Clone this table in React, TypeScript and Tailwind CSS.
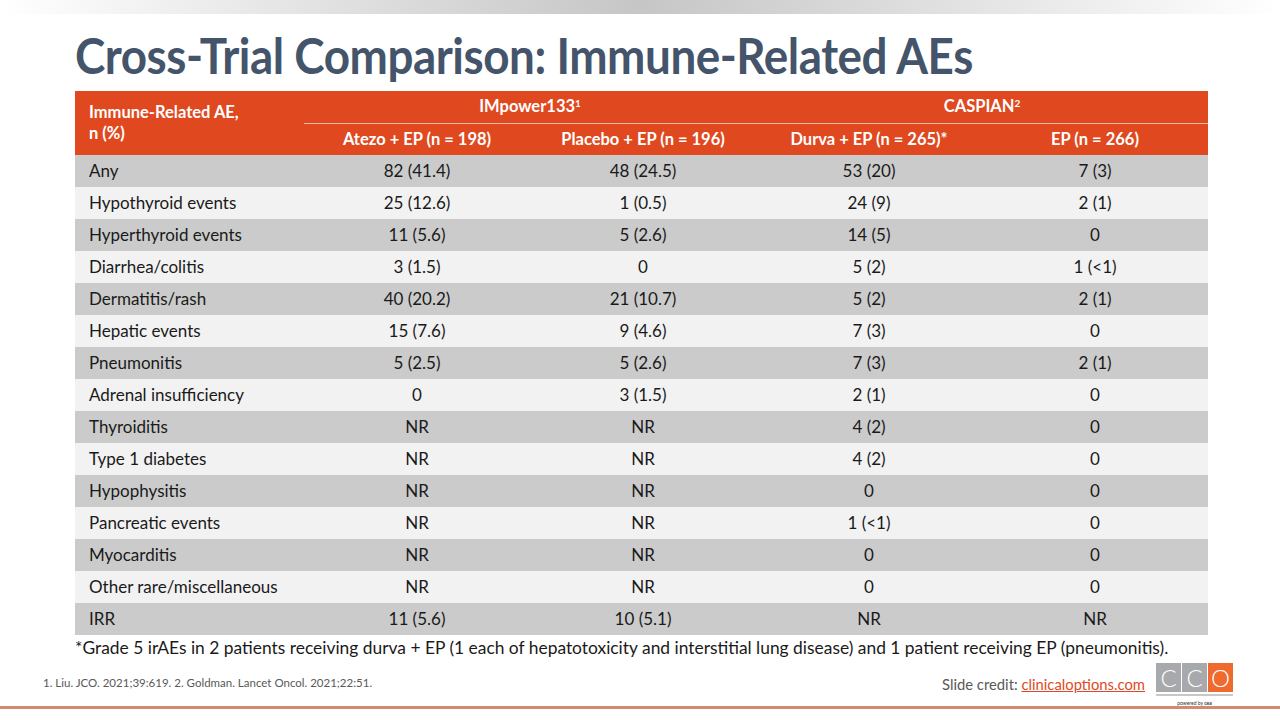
const rows: [string, string, string, string, string][] = [
  ['Any', '82 (41.4)', '48 (24.5)', '53 (20)', '7 (3)'],
  ['Hypothyroid events', '25 (12.6)', '1 (0.5)', '24 (9)', '2 (1)'],
  ['Hyperthyroid events', '11 (5.6)', '5 (2.6)', '14 (5)', '0'],
  ['Diarrhea/colitis', '3 (1.5)', '0', '5 (2)', '1 (<1)'],
  ['Dermatitis/rash', '40 (20.2)', '21 (10.7)', '5 (2)', '2 (1)'],
  ['Hepatic events', '15 (7.6)', '9 (4.6)', '7 (3)', '0'],
  ['Pneumonitis', '5 (2.5)', '5 (2.6)', '7 (3)', '2 (1)'],
  ['Adrenal insufficiency', '0', '3 (1.5)', '2 (1)', '0'],
  ['Thyroiditis', 'NR', 'NR', '4 (2)', '0'],
  ['Type 1 diabetes', 'NR', 'NR', '4 (2)', '0'],
  ['Hypophysitis', 'NR', 'NR', '0', '0'],
  ['Pancreatic events', 'NR', 'NR', '1 (<1)', '0'],
  ['Myocarditis', 'NR', 'NR', '0', '0'],
  ['Other rare/miscellaneous', 'NR', 'NR', '0', '0'],
  ['IRR', '11 (5.6)', '10 (5.1)', 'NR', 'NR'],
];

function CcoLogo() {
  return (
    <div className="flex flex-col items-center">
      <div className="flex gap-px">
        <div className="w-[25px] h-[29px] bg-[#a7a9ac] flex items-center justify-center text-white text-[24px] font-light leading-none">C</div>
        <div className="w-[25px] h-[29px] bg-[#a7a9ac] flex items-center justify-center text-white text-[24px] font-light leading-none">C</div>
        <div className="w-[25px] h-[29px] bg-[#ee6a2f] flex items-center justify-center text-white text-[24px] font-light leading-none">O</div>
      </div>
      <div className="w-[77px] h-[2px] bg-[#c8c8c8] mt-[2px]" />
      <div className="text-[5px] leading-none mt-[5px] text-[#333]">powered by <span className="font-bold">cea</span></div>
    </div>
  );
}

export default function App() {
  return (
    <div className="w-[1280px] h-[720px] bg-white relative overflow-hidden flex flex-col" style={{ fontFamily: 'Lato, "Open Sans", sans-serif' }}>
      <div className="h-[14px] w-full bg-gradient-to-r from-white via-[#c6c6c6] to-white" />

      <h1 className="ml-[75px] mt-[12px] text-[49px] leading-[58px] font-bold text-[#44546a] tracking-[-0.5px] origin-left scale-x-[0.935] whitespace-nowrap">
        Cross-Trial Comparison: Immune-Related AEs
      </h1>

      <table className="ml-[75px] mt-[7px] border-collapse table-fixed w-[1133px] text-[17px] text-[#1a1a1a]">
        <colgroup>
          <col className="w-[229px]" />
          <col className="w-[226px]" />
          <col className="w-[226px]" />
          <col className="w-[226px]" />
          <col className="w-[226px]" />
        </colgroup>
        <thead className="text-white font-bold text-[16.5px]">
          <tr className="h-[32px] bg-[#e0491f]">
            <td rowSpan={2} className="pl-[14px] align-middle leading-[21px]">
              Immune-Related AE,<br />n (%)
            </td>
            <td colSpan={2} className="text-center border-b border-[#f3b9a6]">
              IMpower133<sup className="text-[10px]">1</sup>
            </td>
            <td colSpan={2} className="text-center border-b border-[#f3b9a6]">
              CASPIAN<sup className="text-[10px]">2</sup>
            </td>
          </tr>
          <tr className="h-[32px] bg-[#e0491f]">
            <td className="text-center">Atezo + EP (n = 198)</td>
            <td className="text-center">Placebo + EP (n = 196)</td>
            <td className="text-center">Durva + EP (n = 265)*</td>
            <td className="text-center">EP (n = 266)</td>
          </tr>
        </thead>
        <tbody>
          {rows.map((r, i) => (
            <tr key={r[0]} className={i % 2 === 0 ? 'h-[32px] bg-[#cbcbcb]' : 'h-[32px] bg-[#f2f2f2]'}>
              <td className="pl-[14px]">{r[0]}</td>
              <td className="text-center">{r[1]}</td>
              <td className="text-center">{r[2]}</td>
              <td className="text-center">{r[3]}</td>
              <td className="text-center">{r[4]}</td>
            </tr>
          ))}
        </tbody>
      </table>

      <p className="ml-[75px] mt-[1px] text-[17.4px] leading-[24px] text-[#1a1a1a] whitespace-nowrap">
        *Grade 5 irAEs in 2 patients receiving durva + EP (1 each of hepatotoxicity and interstitial lung disease) and 1 patient receiving EP (pneumonitis).
      </p>

      <div className="flex items-start mt-[2px]">
        <div className="ml-[43px] mt-[12px] text-[11.5px] text-[#595959]">
          1. Liu. JCO. 2021;39:619. 2. Goldman. Lancet Oncol. 2021;22:51.
        </div>
        <div className="ml-auto mt-[11px] text-[14.8px] text-[#595959]">
          Slide credit: <span className="text-[#e0491f] underline">clinicaloptions.com</span>
        </div>
        <div className="ml-[11px] mr-[47px] mt-[1px]">
          <CcoLogo />
        </div>
      </div>

      <div className="absolute left-0 right-0 top-[706px] h-[3px] bg-[#d38b6f]" />
    </div>
  );
}
